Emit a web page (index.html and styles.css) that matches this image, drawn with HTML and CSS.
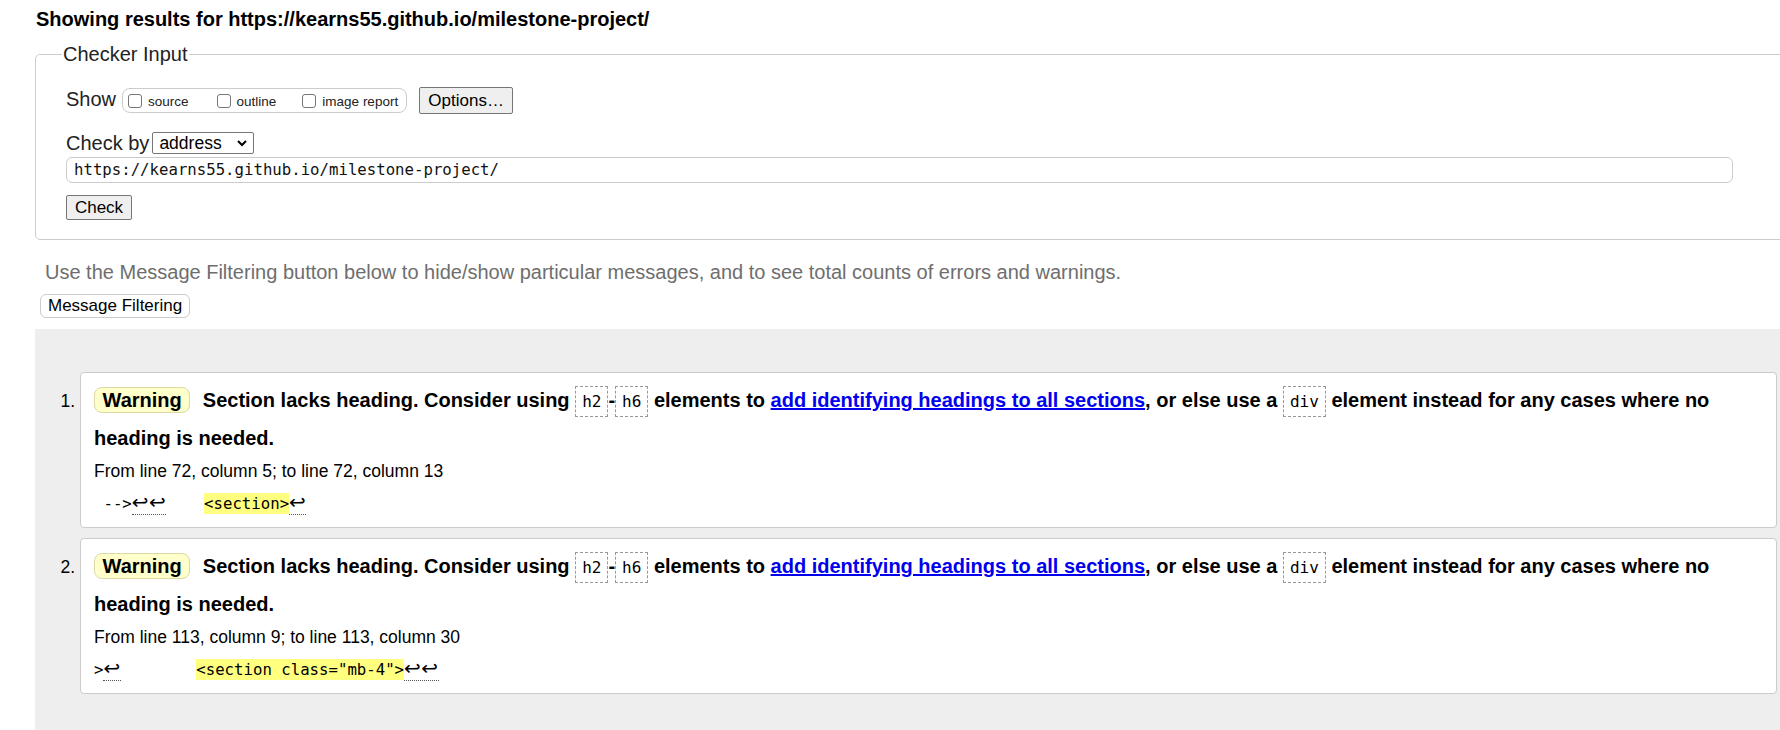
FILE: index.html
```html
<!DOCTYPE html>
<html lang="en">
<head>
<meta charset="utf-8">
<title>Nu Html Checker</title>
<link rel="stylesheet" href="styles.css">
</head>
<body>
<h2 class="title">Showing results for https://kearns55.github.io/milestone-project/</h2>
<form class="checker">
  <fieldset class="input-fs">
    <legend class="legend">Checker Input</legend>
    <div class="show-row">
      <span class="lbl lbl-show">Show</span>
      <span class="show-box">
        <span class="opt"><span class="cb"></span><span class="opt-text">source</span></span>
        <span class="opt"><span class="cb"></span><span class="opt-text">outline</span></span>
        <span class="opt opt-last"><span class="cb"></span><span class="opt-text">image report</span></span>
      </span>
      <span class="btn btn-options">Options…</span>
    </div>
    <div class="checkby-row">
      <span class="lbl">Check by</span>
      <span class="select"><span class="select-text">address</span><svg class="chev" width="10" height="7" viewBox="0 0 10 7"><polyline points="1,1 5,5 9,1" fill="none" stroke="#000" stroke-width="2"/></svg></span>
    </div>
    <div class="url-box">https://kearns55.github.io/milestone-project/</div>
    <div class="check-row"><span class="btn btn-check">Check</span></div>
  </fieldset>
</form>
<p class="note">Use the Message Filtering button below to hide/show particular messages, and to see total counts of errors and warnings.</p>
<div class="filter-row"><span class="btn-filter">Message Filtering</span></div>
<div class="results">
  <ol class="messages">
    <li class="msg">
      <p class="msg-text"><span class="badge">Warning</span> <span>Section lacks heading. Consider using <code>h2</code>-<code>h6</code> elements to <a href="#">add identifying headings to all sections</a>, or else use a <code>div</code> element instead for any cases where no heading is needed.</span></p>
      <p class="location">From line 72, column 5; to line 72, column 13</p>
      <p class="extract"><code> --&gt;<span class="lf">↩↩</span>    <b>&lt;section&gt;</b><span class="lf">↩</span></code></p>
    </li>
    <li class="msg">
      <p class="msg-text"><span class="badge">Warning</span> <span>Section lacks heading. Consider using <code>h2</code>-<code>h6</code> elements to <a href="#">add identifying headings to all sections</a>, or else use a <code>div</code> element instead for any cases where no heading is needed.</span></p>
      <p class="location">From line 113, column 9; to line 113, column 30</p>
      <p class="extract"><code>&gt;<span class="lf">↩</span>        <b>&lt;section class="mb-4"&gt;</b><span class="lf">↩↩</span></code></p>
    </li>
  </ol>
</div>
</body>
</html>
```

FILE: styles.css
```css
* { box-sizing: border-box; }
html { overflow: hidden; background: #fff; }
body {
  margin: 0;
  padding: 0 0 0 35px;
  width: 1780px;
  height: 730px;
  overflow: hidden;
  font-family: "Liberation Sans", Arial, sans-serif;
  font-size: 20px;
  color: #000;
  background: #fff;
}

.title {
  margin: 0 0 0 1px;
  padding-top: 7px;
  font-size: 20px;
  line-height: 24px;
  font-weight: bold;
}

.checker { margin: 0; }

.input-fs {
  margin: 11px 0 0 0;
  padding: 21px 0 19px 30px;
  border: 1px solid #ccc;
  border-radius: 5px;
  width: 1800px;
  min-width: 0;
}

.legend {
  margin-left: -4px;
  padding: 0 1px;
  font-size: 20px;
  line-height: 24px;
  color: #222;
}

.show-row {
  display: flex;
  align-items: center;
  height: 27px;
}

.lbl {
  font-size: 20px;
  line-height: 24px;
  color: #222;
}

.lbl-show { padding-bottom: 3px; }

.show-box {
  display: flex;
  align-items: center;
  height: 25px;
  margin-left: 6px;
  padding: 0 8px 0 5px;
  border: 1px solid #ccc;
  border-radius: 8px;
}

.opt {
  display: flex;
  align-items: center;
  margin-right: 28px;
}
.opt:nth-child(2) { margin-right: 26px; }
.opt-last { margin-right: 0; }

.cb {
  width: 14px;
  height: 14px;
  border: 1px solid #767676;
  border-radius: 3px;
  background: #fff;
  margin-right: 6px;
}

.opt-text {
  font-size: 13.5px;
  line-height: 16px;
  padding-top: 3px;
  color: #222;
}

.btn {
  display: inline-flex;
  align-items: center;
  justify-content: center;
  background: #efefef;
  border: 1px solid #767676;
  border-radius: 2px;
  font-size: 17px;
  color: #000;
}

.btn-options {
  margin-left: 12px;
  width: 94px;
  height: 27px;
}

.checkby-row {
  display: flex;
  align-items: center;
  height: 22px;
  margin-top: 18px;
}

.select {
  display: flex;
  align-items: center;
  justify-content: space-between;
  margin-left: 3px;
  width: 102px;
  height: 22px;
  padding: 0 6px 0 6px;
  border: 1px solid #767676;
  border-radius: 2px;
  background: #fff;
  font-size: 17.5px;
}

.chev { display: block; }

.url-box {
  margin-top: 3px;
  width: 1667px;
  height: 26px;
  padding-left: 7px;
  border: 1px solid #ccc;
  border-radius: 6px;
  font-family: "DejaVu Sans Mono", monospace;
  font-size: 15.7px;
  line-height: 24px;
  color: #111;
}

.check-row {
  margin-top: 12px;
  display: flex;
}

.btn-check {
  width: 66px;
  height: 25px;
}

.note {
  margin: 20px 0 0 10px;
  font-size: 20px;
  line-height: 24px;
  color: #6e6e6e;
}

.filter-row {
  margin: 10px 0 0 5px;
  display: flex;
}

.btn-filter {
  display: inline-flex;
  align-items: center;
  height: 24px;
  padding: 0 7px;
  border: 1px solid #ccc;
  border-radius: 6px;
  background: #fff;
  font-size: 17px;
}

.results {
  margin-top: 11px;
  background: #eee;
  padding: 43px 3px 60px 45px;
}

.messages {
  margin: 0;
  padding: 0;
  list-style: decimal outside;
  font-size: 17.5px;
}

.msg {
  background: #fff;
  border: 1px solid #ccc;
  border-radius: 4px;
  padding: 9px 14px 12px 13px;
  margin-bottom: 10px;
}

.msg-text {
  margin: 0;
  font-size: 20px;
  font-weight: bold;
  line-height: 36px;
}

.badge {
  display: inline-block;
  line-height: 22px;
  padding: 1px 7.5px;
  border: 1px solid #dcd9a4;
  border-radius: 8px;
  background: #ffffcc;
  margin-right: 7px;
}

.msg-text code {
  font-family: "DejaVu Sans Mono", monospace;
  font-size: 16px;
  font-weight: normal;
  border: 1px dashed #999;
  padding: 5px 6px;
}

.msg-text a {
  color: #0000ee;
  text-decoration: underline;
}

.location {
  margin: 3px 0 0;
  font-size: 17.5px;
  line-height: 24px;
}

.extract {
  margin: 8px 0 0;
  line-height: 24px;
  height: 24px;
}

.extract code {
  font-family: "DejaVu Sans Mono", monospace;
  font-size: 15.7px;
  line-height: 24px;
  white-space: pre;
}

.extract b {
  font-weight: normal;
  background: #ffff80;
  padding: 1px 0;
}

.lf {
  font-family: "DejaVu Sans", sans-serif;
  font-size: 20px;
  line-height: 1;
  letter-spacing: 0.5px;
  border-bottom: 1px dotted #555;
}
```
